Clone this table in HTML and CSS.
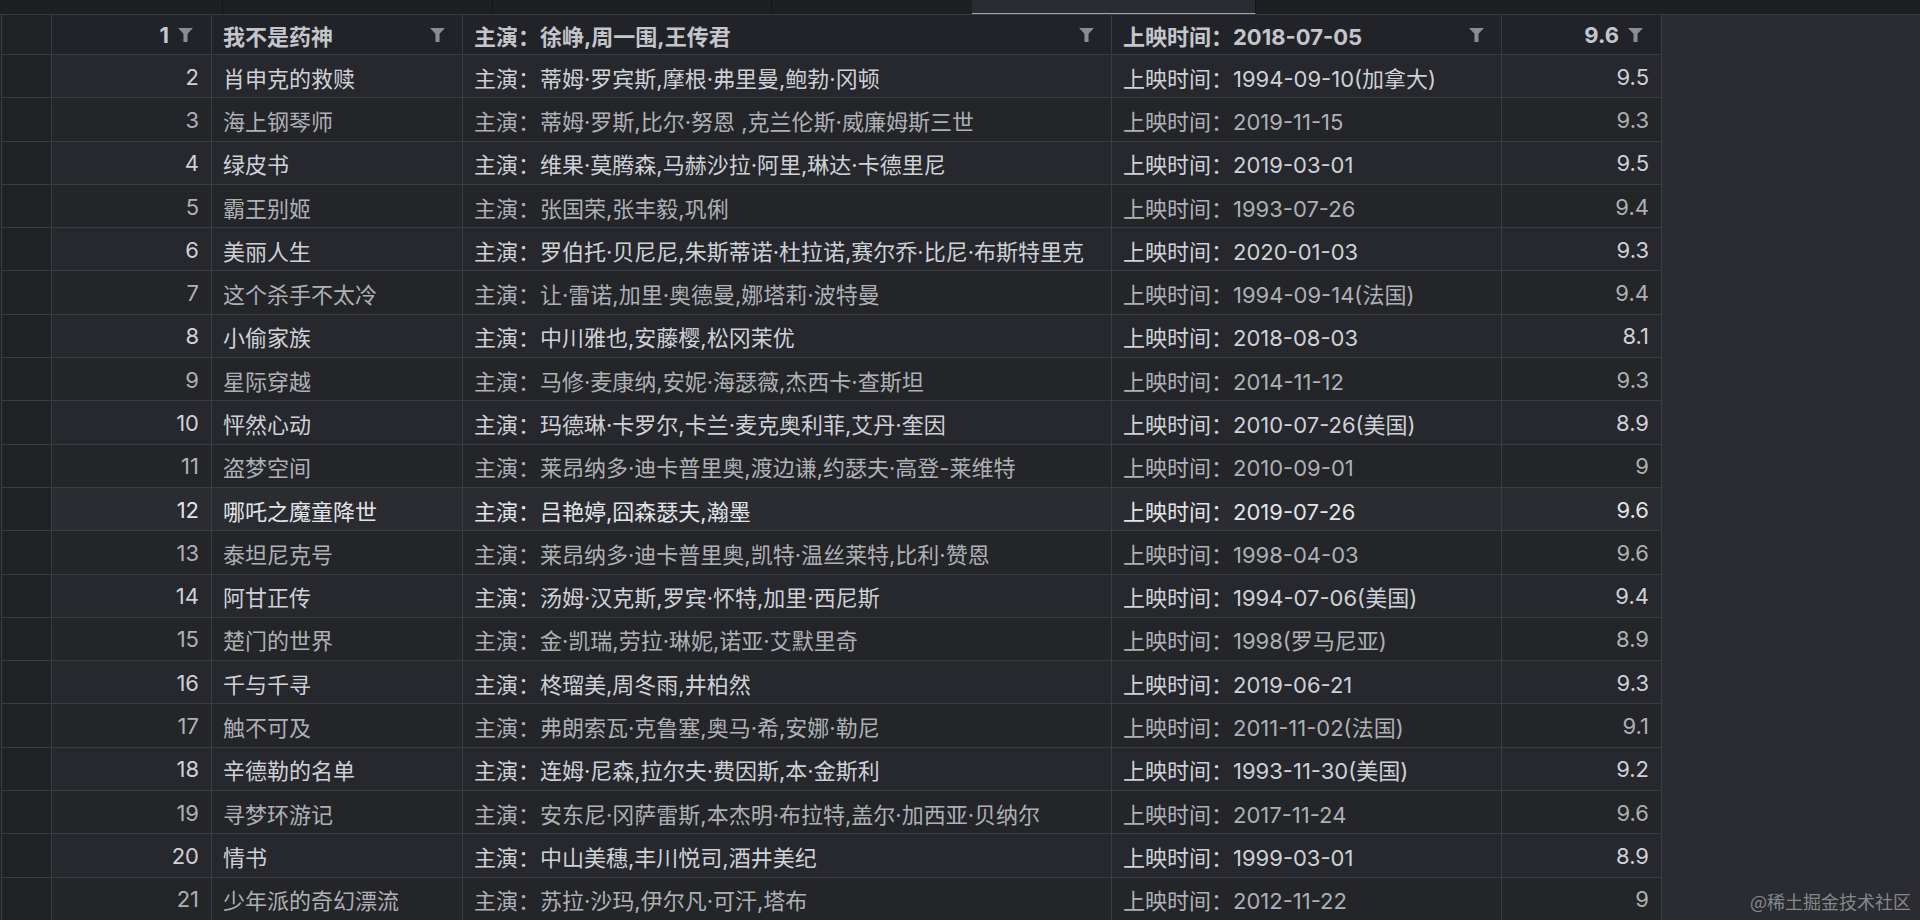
FILE: index.html
```html
<!DOCTYPE html>
<html lang="zh-CN">
<head>
<meta charset="utf-8">
<title>电影表格</title>
<link rel="stylesheet" href="styles.css">
</head>
<body>
<div class="topbar">
  <div class="seg seg-a"></div>
  <div class="seg seg-b"></div>
  <div class="seg seg-c"></div>
  <div class="seg seg-d"></div>
  <div class="seg seg-tab"></div>
  <div class="seg seg-rest"></div>
</div>
<div class="main">
  <div class="sheet">
    <div class="row head">
      <div class="c c0"></div>
      <div class="c num"><span>1</span><svg class="funnel" viewBox="0 0 16 15"><path d="M0 0H16L10.2 6.2V15H5.8V6.2Z"/></svg></div>
      <div class="c txt"><span>我不是药神</span><svg class="funnel" viewBox="0 0 16 15"><path d="M0 0H16L10.2 6.2V15H5.8V6.2Z"/></svg></div>
      <div class="c txt"><span>主演：徐峥,周一围,王传君</span><svg class="funnel" viewBox="0 0 16 15"><path d="M0 0H16L10.2 6.2V15H5.8V6.2Z"/></svg></div>
      <div class="c txt"><span>上映时间：2018-07-05</span><svg class="funnel" viewBox="0 0 16 15"><path d="M0 0H16L10.2 6.2V15H5.8V6.2Z"/></svg></div>
      <div class="c num"><span>9.6</span><svg class="funnel" viewBox="0 0 16 15"><path d="M0 0H16L10.2 6.2V15H5.8V6.2Z"/></svg></div>
    </div>
    <div class="row even"><div class="c c0"></div><div class="c num">2</div><div class="c txt">肖申克的救赎</div><div class="c txt">主演：蒂姆·罗宾斯,摩根·弗里曼,鲍勃·冈顿</div><div class="c txt">上映时间：1994-09-10(加拿大)</div><div class="c num">9.5</div></div>
    <div class="row odd"><div class="c c0"></div><div class="c num">3</div><div class="c txt">海上钢琴师</div><div class="c txt">主演：蒂姆·罗斯,比尔·努恩 ,克兰伦斯·威廉姆斯三世</div><div class="c txt">上映时间：2019-11-15</div><div class="c num">9.3</div></div>
    <div class="row even"><div class="c c0"></div><div class="c num">4</div><div class="c txt">绿皮书</div><div class="c txt">主演：维果·莫腾森,马赫沙拉·阿里,琳达·卡德里尼</div><div class="c txt">上映时间：2019-03-01</div><div class="c num">9.5</div></div>
    <div class="row odd"><div class="c c0"></div><div class="c num">5</div><div class="c txt">霸王别姬</div><div class="c txt">主演：张国荣,张丰毅,巩俐</div><div class="c txt">上映时间：1993-07-26</div><div class="c num">9.4</div></div>
    <div class="row even"><div class="c c0"></div><div class="c num">6</div><div class="c txt">美丽人生</div><div class="c txt">主演：罗伯托·贝尼尼,朱斯蒂诺·杜拉诺,赛尔乔·比尼·布斯特里克</div><div class="c txt">上映时间：2020-01-03</div><div class="c num">9.3</div></div>
    <div class="row odd"><div class="c c0"></div><div class="c num">7</div><div class="c txt">这个杀手不太冷</div><div class="c txt">主演：让·雷诺,加里·奥德曼,娜塔莉·波特曼</div><div class="c txt">上映时间：1994-09-14(法国)</div><div class="c num">9.4</div></div>
    <div class="row even"><div class="c c0"></div><div class="c num">8</div><div class="c txt">小偷家族</div><div class="c txt">主演：中川雅也,安藤樱,松冈茉优</div><div class="c txt">上映时间：2018-08-03</div><div class="c num">8.1</div></div>
    <div class="row odd"><div class="c c0"></div><div class="c num">9</div><div class="c txt">星际穿越</div><div class="c txt">主演：马修·麦康纳,安妮·海瑟薇,杰西卡·查斯坦</div><div class="c txt">上映时间：2014-11-12</div><div class="c num">9.3</div></div>
    <div class="row even"><div class="c c0"></div><div class="c num">10</div><div class="c txt">怦然心动</div><div class="c txt">主演：玛德琳·卡罗尔,卡兰·麦克奥利菲,艾丹·奎因</div><div class="c txt">上映时间：2010-07-26(美国)</div><div class="c num">8.9</div></div>
    <div class="row odd"><div class="c c0"></div><div class="c num">11</div><div class="c txt">盗梦空间</div><div class="c txt">主演：莱昂纳多·迪卡普里奥,渡边谦,约瑟夫·高登-莱维特</div><div class="c txt">上映时间：2010-09-01</div><div class="c num">9</div></div>
    <div class="row even sel"><div class="c c0"></div><div class="c num">12</div><div class="c txt">哪吒之魔童降世</div><div class="c txt">主演：吕艳婷,囧森瑟夫,瀚墨</div><div class="c txt">上映时间：2019-07-26</div><div class="c num">9.6</div></div>
    <div class="row odd"><div class="c c0"></div><div class="c num">13</div><div class="c txt">泰坦尼克号</div><div class="c txt">主演：莱昂纳多·迪卡普里奥,凯特·温丝莱特,比利·赞恩</div><div class="c txt">上映时间：1998-04-03</div><div class="c num">9.6</div></div>
    <div class="row even"><div class="c c0"></div><div class="c num">14</div><div class="c txt">阿甘正传</div><div class="c txt">主演：汤姆·汉克斯,罗宾·怀特,加里·西尼斯</div><div class="c txt">上映时间：1994-07-06(美国)</div><div class="c num">9.4</div></div>
    <div class="row odd"><div class="c c0"></div><div class="c num">15</div><div class="c txt">楚门的世界</div><div class="c txt">主演：金·凯瑞,劳拉·琳妮,诺亚·艾默里奇</div><div class="c txt">上映时间：1998(罗马尼亚)</div><div class="c num">8.9</div></div>
    <div class="row even"><div class="c c0"></div><div class="c num">16</div><div class="c txt">千与千寻</div><div class="c txt">主演：柊瑠美,周冬雨,井柏然</div><div class="c txt">上映时间：2019-06-21</div><div class="c num">9.3</div></div>
    <div class="row odd"><div class="c c0"></div><div class="c num">17</div><div class="c txt">触不可及</div><div class="c txt">主演：弗朗索瓦·克鲁塞,奥马·希,安娜·勒尼</div><div class="c txt">上映时间：2011-11-02(法国)</div><div class="c num">9.1</div></div>
    <div class="row even"><div class="c c0"></div><div class="c num">18</div><div class="c txt">辛德勒的名单</div><div class="c txt">主演：连姆·尼森,拉尔夫·费因斯,本·金斯利</div><div class="c txt">上映时间：1993-11-30(美国)</div><div class="c num">9.2</div></div>
    <div class="row odd"><div class="c c0"></div><div class="c num">19</div><div class="c txt">寻梦环游记</div><div class="c txt">主演：安东尼·冈萨雷斯,本杰明·布拉特,盖尔·加西亚·贝纳尔</div><div class="c txt">上映时间：2017-11-24</div><div class="c num">9.6</div></div>
    <div class="row even"><div class="c c0"></div><div class="c num">20</div><div class="c txt">情书</div><div class="c txt">主演：中山美穗,丰川悦司,酒井美纪</div><div class="c txt">上映时间：1999-03-01</div><div class="c num">8.9</div></div>
    <div class="row odd"><div class="c c0"></div><div class="c num">21</div><div class="c txt">少年派的奇幻漂流</div><div class="c txt">主演：苏拉·沙玛,伊尔凡·可汗,塔布</div><div class="c txt">上映时间：2012-11-22</div><div class="c num">9</div></div>
  </div>
  <div class="empty"></div>
</div>
<div class="watermark">@稀土掘金技术社区</div>
</body>
</html>
```
FILE: styles.css
```css
html, body {
  margin: 0;
  padding: 0;
  height: 920px;
  overflow: hidden;
}
body {
  background: #1f2125;
  font-family: Inter, "Noto Sans CJK SC", sans-serif;
  font-size: 22px;
  color: #c2c4c9;
  position: relative;
}
.topbar {
  display: flex;
  height: 14px;
  background: #1d1f23;
  border-bottom: 1px solid #38393e;
}
.seg { height: 14px; box-sizing: border-box; }
.seg-a { width: 223px; border-right: 1px solid #131417; }
.seg-b { width: 270px; border-right: 1px solid #131417; }
.seg-c { width: 279px; border-right: 1px solid #131417; }
.seg-d { width: 200px; }
.seg-tab {
  width: 284px;
  background: #2a2c31;
  border-bottom: 1px solid #a4a6ab;
  border-right: 1px solid #131417;
}
.seg-rest { flex: 1; }

.main {
  display: flex;
  height: 905px;
}
.sheet {
  margin-left: 1px;
  display: flex;
  flex-direction: column;
  gap: 1px;
  background: #3a3c41;
  border-left: 1px solid #3a3c41;
  border-right: 1px solid #3a3c41;
}
.row {
  display: grid;
  grid-template-columns: 49px 159px 250px 648px 389px 159px;
  gap: 1px;
  height: 42.333px;
}
.row.head { height: 39px; }
.c {
  display: flex;
  align-items: center;
  white-space: nowrap;
  overflow: hidden;
  box-sizing: border-box;
  padding: 1px 12px 0 11px;
}
.c0 { background: #1f2125; padding: 0; }
.num { justify-content: flex-end; }
.head .c { background: #212328; font-weight: 700; color: #c4c6cb; }
.head .c0 { background: #1f2125; }
.head .txt { justify-content: space-between; padding-right: 17px; }
.head .num { gap: 9px; padding-right: 18px; }
.funnel { width: 15px; height: 14px; fill: #8a8c91; flex: none; }

.even .c { background: #26282d; color: #cfd1d6; }
.odd .c { background: #232529; color: #aeb0b5; }
.even .c0, .odd .c0 { background: #1f2125; }
.sel .c { background: #2a2c31; color: #e2e4e8; }
.sel .c0 { background: #1f2125; }

.empty {
  flex: 1;
  background: #2a2c31;
}
.watermark {
  position: absolute;
  right: 9px;
  bottom: 6px;
  font-size: 18px;
  color: #86888c;
  font-family: "Noto Sans CJK SC", sans-serif;
}
```
